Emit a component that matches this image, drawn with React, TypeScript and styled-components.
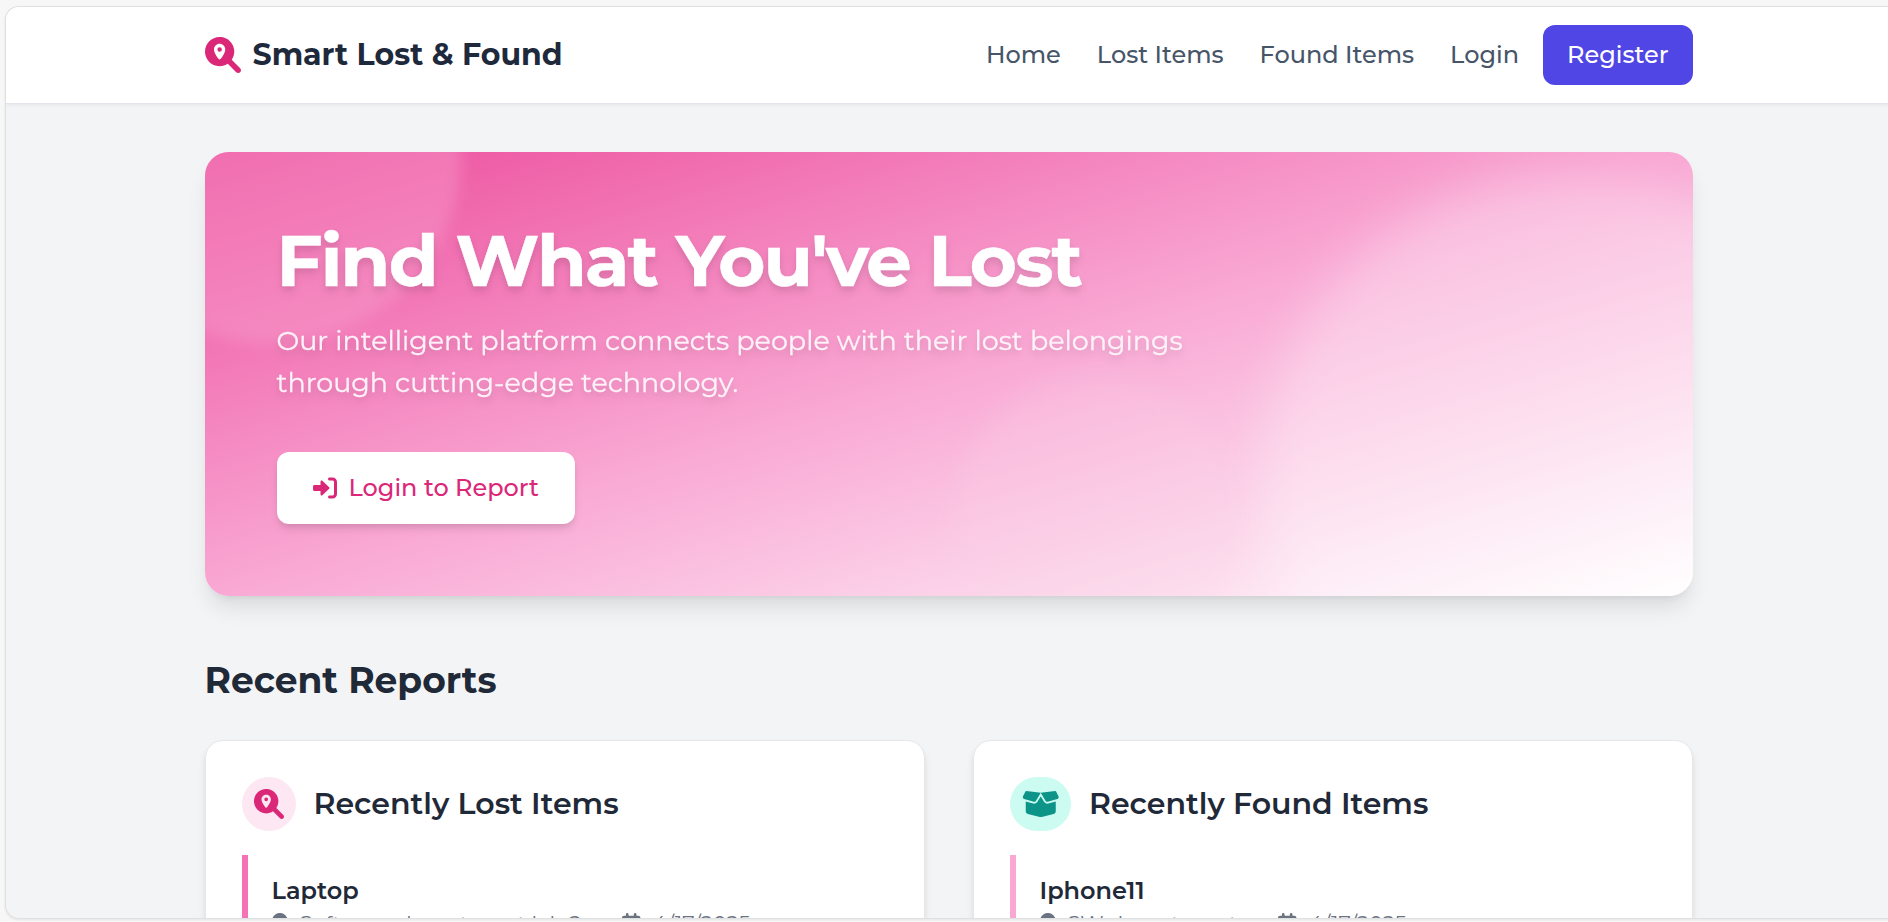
import React from "react";
import styled, { createGlobalStyle } from "styled-components";
import { FaBoxOpen, FaLocationDot, FaCalendar } from "react-icons/fa6";

const GlobalStyle = createGlobalStyle`
  *, *::before, *::after { box-sizing: border-box; }
  html, body { margin: 0; padding: 0; }
  body {
    background: #f7f7f7;
    color: #1f2937;
    font-family: Montserrat, Inter, sans-serif;
    font-size: 24px;
    line-height: 36px;
    overflow: hidden;
  }
  h1, h2, h3, h4, p { margin: 0; }
  a { color: inherit; text-decoration: none; }
  svg { display: block; flex: none; }
`;

const Viewport = styled.div`
  height: 922px;
  padding: 6px 0 0 5px;
  overflow: hidden;
`;

const Frame = styled.div`
  width: 1886px;
  height: 913px;
  border: 1px solid #dfe0e2;
  border-right: 0;
  border-radius: 14px 0 0 14px;
  background: #f3f4f6;
  box-shadow: 0 1px 3px rgba(0, 0, 0, 0.08);
  overflow: hidden;
`;

const Container = styled.div`
  width: 1488px;
  margin: 0 auto;
`;

const Header = styled.header`
  border-bottom: 1px solid #e2e5eb;
  background: #fff;
  box-shadow: 0 1.5px 3px rgba(0, 0, 0, 0.05);
`;

const HeaderRow = styled(Container)`
  display: flex;
  align-items: center;
  justify-content: space-between;
  height: 96px;
`;

const Brand = styled.a`
  display: flex;
  align-items: center;
  gap: 12px;
  color: #1e293b;
  font-size: 30px;
  font-weight: 700;
  line-height: 42px;

  svg { color: #db2777; }
`;

const Nav = styled.nav`
  display: flex;
  align-items: center;
  gap: 36px;
`;

const NavLink = styled.a`
  color: #475569;
  font-weight: 500;
`;

const Account = styled.div`
  display: flex;
  align-items: center;
  gap: 24px;
`;

const RegisterButton = styled.a`
  padding: 12px 24px;
  border-radius: 12px;
  background: #4f46e5;
  color: #fff;
  font-weight: 500;
`;

const Hero = styled.section`
  position: relative;
  height: 444px;
  margin-top: 48px;
  padding: 72px;
  border-radius: 24px;
  background: linear-gradient(to bottom right, #ec4d9c, #f9a8d4, #fff);
  box-shadow: 0 15px 22.5px -4.5px rgba(0, 0, 0, 0.1), 0 6px 9px -6px rgba(0, 0, 0, 0.1);
`;

const Backdrop = styled.div`
  position: absolute;
  inset: 0;
  border-radius: inherit;
  overflow: hidden;
`;

const Glow = styled.span<{ $x: number; $y: number; $r: number; $blur: number; $color: string }>`
  position: absolute;
  left: ${(p) => p.$x - p.$r}px;
  top: ${(p) => p.$y - p.$r}px;
  width: ${(p) => p.$r * 2}px;
  height: ${(p) => p.$r * 2}px;
  border-radius: 50%;
  background: ${(p) => p.$color};
  filter: blur(${(p) => p.$blur}px);
`;

const HeroBody = styled.div`
  position: relative;
  display: flex;
  flex-direction: column;
  align-items: flex-start;
`;

const HeroTitle = styled.h1`
  color: #fff;
  font-size: 72px;
  font-weight: 700;
  line-height: 72px;
  letter-spacing: -1.8px;
  -webkit-text-stroke: 0.5px #fff;
  filter: drop-shadow(0 6px 4.5px rgba(0, 0, 0, 0.07)) drop-shadow(0 3px 3px rgba(0, 0, 0, 0.06));
`;

const HeroText = styled.p`
  width: 1008px;
  margin-top: 24px;
  color: #fdf2f8;
  font-size: 27px;
  line-height: 42px;
  -webkit-text-stroke: 0.3px #fdf2f8;
  filter: drop-shadow(0 6px 4.5px rgba(0, 0, 0, 0.07)) drop-shadow(0 3px 3px rgba(0, 0, 0, 0.06));
`;

const HeroButton = styled.a`
  display: flex;
  align-items: center;
  gap: 12px;
  height: 72px;
  margin-top: 48px;
  padding: 0 36px;
  border-radius: 12px;
  background: #fff;
  box-shadow: 0 6px 9px -1.5px rgba(0, 0, 0, 0.1), 0 3px 6px -3px rgba(0, 0, 0, 0.1);
  color: #db2777;
  font-weight: 500;
`;

const SectionTitle = styled.h2`
  margin: 60px 0 36px;
  font-size: 36px;
  font-weight: 700;
  line-height: 48px;
`;

const Cards = styled.div`
  display: grid;
  grid-template-columns: 1fr 1fr;
  gap: 48px;
`;

const Card = styled.section`
  height: 420px;
  padding: 36px;
  border: 1px solid #e5e7eb;
  border-radius: 18px;
  background: #fff;
  box-shadow: 0 6px 9px -1.5px rgba(0, 0, 0, 0.1), 0 3px 6px -3px rgba(0, 0, 0, 0.1);
`;

const CardHead = styled.div`
  display: flex;
  align-items: center;
  gap: 18px;
  margin-bottom: 24px;
`;

const IconBadge = styled.span<{ $tone: "pink" | "teal" }>`
  display: flex;
  padding: 12px;
  border-radius: 999px;
  background: ${(p) => (p.$tone === "pink" ? "#fce7f3" : "#ccfbf1")};
  color: ${(p) => (p.$tone === "pink" ? "#db2777" : "#0d9488")};
`;

const BoxIcon = styled(FaBoxOpen)`
  width: 37.5px;
  height: 30px;
`;

const CardTitle = styled.h3`
  font-size: 30px;
  font-weight: 600;
  line-height: 42px;
`;

const Item = styled.article<{ $bar: string }>`
  padding: 18px 24px;
  border-left: 6px solid ${(p) => p.$bar};
`;

const ItemTitle = styled.h4`
  font-size: 24px;
  font-weight: 600;
  line-height: 36px;
`;

const Meta = styled.div`
  display: flex;
  align-items: center;
  gap: 41px;
  color: #6b7280;
  font-size: 21px;
  line-height: 30px;
`;

const MetaPart = styled.span`
  display: flex;
  align-items: center;
  gap: 12px;
`;

const PlaceIcon = styled(FaLocationDot)`
  width: 15.75px;
  height: 21px;
  margin-top: -2px;
`;

const DateIcon = styled(FaCalendar)`
  width: 18.375px;
  height: 21px;
  margin-top: -2px;
`;

function SearchPinIcon({ size }: { size: number }) {
  return (
    <svg width={size} height={size} viewBox="0 0 512 512" fill="currentColor" fillRule="evenodd">
      <path d="M500.3 443.7l-119.7-119.7c27.22-40.41 40.65-90.9 33.46-144.7C401.8 87.79 326.8 13.32 235.2 1.723C99.01-15.51-15.51 99.01 1.724 235.2c11.6 91.64 86.08 166.7 177.6 178.9c53.8 7.189 104.3-6.236 144.7-33.46l119.7 119.7c15.62 15.62 40.95 15.62 56.57 0C515.9 484.7 515.9 459.3 500.3 443.7zM288 176c0-44.2-35.8-80-80-80s-80 35.8-80 80c0 48.8 46.5 111.6 68.6 138.6c6 7.3 16.8 7.3 22.7 0c22.1-27 68.6-89.8 68.6-138.6zm-112 0a32 32 0 1 1 64 0a32 32 0 1 1-64 0z" />
    </svg>
  );
}

function LoginIcon({ size }: { size: number }) {
  return (
    <svg width={size} height={size} viewBox="0 0 512 512" fill="currentColor">
      <path d="M344.7 238.5l-144.1-136C193.7 95.97 183.4 94.17 174.6 97.95C165.8 101.8 160.1 110.4 160.1 120V192H32.02C14.33 192 0 206.3 0 224v64c0 17.68 14.33 32 32.02 32h128.1v72c0 9.578 5.707 18.25 14.51 22.05c8.803 3.781 19.03 1.984 26-4.594l144.1-136C354.3 264.6 354.3 247.4 344.7 238.5zM416 32h-64c-17.67 0-32 14.33-32 32s14.33 32 32 32h64c17.67 0 32 14.33 32 32v256c0 17.67-14.33 32-32 32h-64c-17.67 0-32 14.33-32 32s14.33 32 32 32h64c53.02 0 96-42.98 96-96V128C512 74.98 469 32 416 32z" />
    </svg>
  );
}

type Report = { title: string; place: string; date: string; bar: string };

function ReportItem({ title, place, date, bar }: Report) {
  return (
    <Item $bar={bar}>
      <ItemTitle>{title}</ItemTitle>
      <Meta>
        <MetaPart><PlaceIcon />{place}</MetaPart>
        <MetaPart><DateIcon />{date}</MetaPart>
      </Meta>
    </Item>
  );
}

export default function App() {
  return (
    <Viewport>
      <GlobalStyle />
      <Frame>
        <Header>
          <HeaderRow>
            <Brand href="#"><SearchPinIcon size={36} />Smart Lost &amp; Found</Brand>
            <Nav>
              <NavLink href="#">Home</NavLink>
              <NavLink href="#">Lost Items</NavLink>
              <NavLink href="#">Found Items</NavLink>
              <Account>
                <NavLink href="#">Login</NavLink>
                <RegisterButton href="#">Register</RegisterButton>
              </Account>
            </Nav>
          </HeaderRow>
        </Header>
        <Container>
          <Hero>
            <Backdrop>
              <Glow $x={65} $y={0} $r={192} $blur={8} $color="rgba(249, 168, 212, 0.36)" />
              <Glow $x={1363} $y={328} $r={306} $blur={24} $color="rgba(255, 255, 255, 0.28)" />
              <Glow $x={891} $y={368} $r={144} $blur={12} $color="rgba(251, 207, 232, 0.24)" />
            </Backdrop>
            <HeroBody>
              <HeroTitle>Find What You've Lost</HeroTitle>
              <HeroText>
                Our intelligent platform connects people with their lost belongings through
                cutting-edge technology.
              </HeroText>
              <HeroButton href="#"><LoginIcon size={24} />Login to Report</HeroButton>
            </HeroBody>
          </Hero>
          <SectionTitle>Recent Reports</SectionTitle>
          <Cards>
            <Card>
              <CardHead>
                <IconBadge $tone="pink"><SearchPinIcon size={30} /></IconBadge>
                <CardTitle>Recently Lost Items</CardTitle>
              </CardHead>
              <ReportItem title="Laptop" place="Software department lab 2" date="4/17/2025" bar="#f472b6" />
            </Card>
            <Card>
              <CardHead>
                <IconBadge $tone="teal"><BoxIcon /></IconBadge>
                <CardTitle>Recently Found Items</CardTitle>
              </CardHead>
              <ReportItem title="Iphone11" place="SW department" date="4/17/2025" bar="#f9a8d4" />
            </Card>
          </Cards>
        </Container>
      </Frame>
    </Viewport>
  );
}
